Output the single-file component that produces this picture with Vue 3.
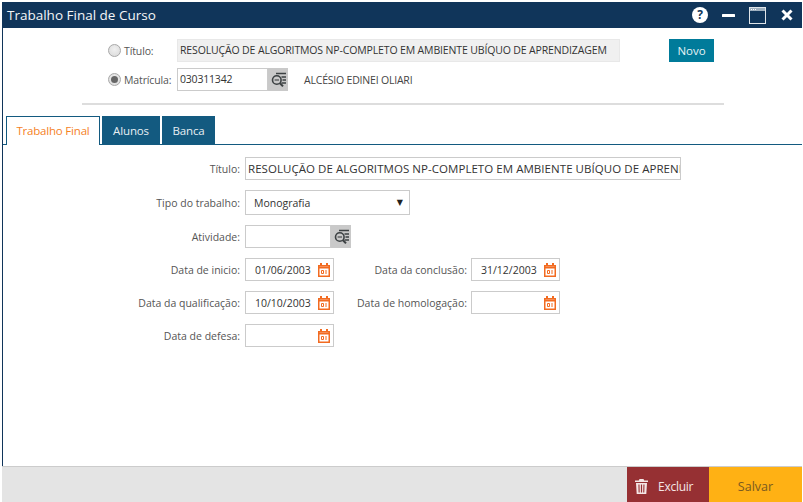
<script setup>
const leftDates = [
  { label: 'Data de inicio:', value: '01/06/2003', label2: 'Data da conclusão:', value2: '31/12/2003' },
  { label: 'Data da qualificação:', value: '10/10/2003', label2: 'Data de homologação:', value2: '' },
]
</script>

<template>
  <div class="window">
    <header class="titlebar">
      <span class="wintitle">Trabalho Final de Curso</span>
      <div class="winicons">
        <svg width="16" height="16" viewBox="0 0 16 16"><circle cx="8" cy="8" r="8" fill="#fff"/><text x="8" y="12.2" text-anchor="middle" class="q">?</text></svg>
        <svg width="13" height="3" viewBox="0 0 13 3"><rect width="13" height="3" rx="0.5" fill="#fff"/></svg>
        <svg width="17" height="17" viewBox="0 0 17 17" fill="none"><rect x="0.5" y="0.5" width="16" height="16" stroke="#dfe5ea" stroke-width="1"/><rect x="1" y="1" width="15" height="3" fill="#9fb0bf"/><path d="M2 2.5h5" stroke="#fff" stroke-dasharray="1 1"/></svg>
        <svg class="closex" width="12" height="12" viewBox="0 0 12 12"><path d="M1.5 1.5l9 9M10.5 1.5l-9 9" stroke="#fff" stroke-width="3"/></svg>
      </div>
    </header>

    <main class="content">
      <section class="search">
        <div class="searchrow">
          <span class="radio"></span>
          <span class="rlabel">Título:</span>
          <div class="readonly">RESOLUÇÃO DE ALGORITMOS NP-COMPLETO EM AMBIENTE UBÍQUO DE APRENDIZAGEM</div>
          <button class="novo">Novo</button>
        </div>
        <div class="searchrow">
          <span class="radio on"></span>
          <span class="rlabel">Matrícula:</span>
          <div class="lookup">
            <div class="field mat">030311342</div>
            <span class="lookbtn">
              <svg width="16" height="16" viewBox="0 0 16 16" fill="none" stroke="#3c4143"><path d="M5 1.5h10" stroke-width="1.5"/><path d="M10.5 5h4.5M11.5 8h3.5M10.5 11h4.5" stroke-width="1.3"/><circle cx="5.8" cy="8" r="4.3" stroke-width="1.6"/><path d="M3.6 8h4.4" stroke-width="1.1"/><path d="M9 11.2l3 3.2" stroke-width="2"/></svg>
            </span>
          </div>
          <span class="person">ALCÉSIO EDINEI OLIARI</span>
        </div>
        <div class="divider"></div>
      </section>

      <nav class="tabs">
        <span class="tab active">Trabalho Final</span>
        <span class="tab w2">Alunos</span>
        <span class="tab w3">Banca</span>
      </nav>

      <section class="form">
        <div class="row">
          <label class="flabel">Título:</label>
          <div class="field long">RESOLUÇÃO DE ALGORITMOS NP-COMPLETO EM AMBIENTE UBÍQUO DE APRENDIZAGEM</div>
        </div>
        <div class="row">
          <label class="flabel">Tipo do trabalho:</label>
          <div class="select"><span>Monografia</span><i class="caret">▼</i></div>
        </div>
        <div class="row">
          <label class="flabel">Atividade:</label>
          <div class="lookup">
            <div class="field act"></div>
            <span class="lookbtn">
              <svg width="16" height="16" viewBox="0 0 16 16" fill="none" stroke="#3c4143"><path d="M5 1.5h10" stroke-width="1.5"/><path d="M10.5 5h4.5M11.5 8h3.5M10.5 11h4.5" stroke-width="1.3"/><circle cx="5.8" cy="8" r="4.3" stroke-width="1.6"/><path d="M3.6 8h4.4" stroke-width="1.1"/><path d="M9 11.2l3 3.2" stroke-width="2"/></svg>
            </span>
          </div>
        </div>
        <div v-for="d in leftDates" :key="d.label" class="row">
          <label class="flabel">{{ d.label }}</label>
          <div class="date">
            <span>{{ d.value }}</span>
            <svg class="cal" width="12" height="14" viewBox="0 0 12 14" fill="none" stroke="#f26b21"><rect x="0.75" y="2.75" width="10.5" height="10.5" stroke-width="1.5"/><path d="M1 4.5h10" stroke-width="2"/><path d="M3 0v3M9 0v3" stroke-width="2"/><path d="M3.5 7.5h2v3h-2zM8 7v4" stroke-width="1"/></svg>
          </div>
          <label class="flabel second">{{ d.label2 }}</label>
          <div class="date">
            <span>{{ d.value2 }}</span>
            <svg class="cal" width="12" height="14" viewBox="0 0 12 14" fill="none" stroke="#f26b21"><rect x="0.75" y="2.75" width="10.5" height="10.5" stroke-width="1.5"/><path d="M1 4.5h10" stroke-width="2"/><path d="M3 0v3M9 0v3" stroke-width="2"/><path d="M3.5 7.5h2v3h-2zM8 7v4" stroke-width="1"/></svg>
          </div>
        </div>
        <div class="row">
          <label class="flabel">Data de defesa:</label>
          <div class="date">
            <span></span>
            <svg class="cal" width="12" height="14" viewBox="0 0 12 14" fill="none" stroke="#f26b21"><rect x="0.75" y="2.75" width="10.5" height="10.5" stroke-width="1.5"/><path d="M1 4.5h10" stroke-width="2"/><path d="M3 0v3M9 0v3" stroke-width="2"/><path d="M3.5 7.5h2v3h-2zM8 7v4" stroke-width="1"/></svg>
          </div>
        </div>
      </section>
    </main>

    <footer class="footer">
      <button class="excluir">
        <svg width="13" height="15" viewBox="0 0 13 15" fill="#f4e6e6"><path d="M4.5 0h4l.7 1.5H13v1.6H0V1.5h3.8z"/><path d="M1 4h11l-.7 11H1.7zM3.4 5.5l.2 8h1.1l-.2-8zM5.9 5.5v8h1.2v-8zM8.4 5.5l-.2 8h1.1l.2-8z" fill-rule="evenodd"/></svg>
        <span>Excluir</span>
      </button>
      <button class="salvar">Salvar</button>
    </footer>
  </div>
</template>

<style scoped>
.window {
  width: 803px;
  height: 502px;
  box-sizing: border-box;
  padding: 2px 1px 0 2px;
  background: #fff;
  display: flex;
  flex-direction: column;
  font-family: "Open Sans", "Noto Sans", sans-serif;
  font-size: 10.5px;
  color: #444;
  overflow: hidden;
}
.titlebar {
  height: 26px;
  flex: none;
  background: #10355a;
  color: #f4f6f8;
  display: flex;
  align-items: center;
  justify-content: space-between;
  padding: 0 9px 0 5px;
}
.wintitle { font-size: 13.5px; }
.winicons { display: flex; align-items: center; gap: 14px; }
.closex { margin-left: 1px; }
.q { font: 700 12px "Open Sans", sans-serif; fill: #10355a; }
.content {
  flex: 1;
  min-height: 0;
  border-left: 1px solid #10355a;
  display: flex;
  flex-direction: column;
}
.search { padding: 11px 0 0 105px; }
.searchrow { display: flex; align-items: center; height: 23px; margin-bottom: 6px; }
.radio {
  width: 13px;
  height: 13px;
  box-sizing: border-box;
  border-radius: 50%;
  border: 1px solid #a8a8a8;
  background: radial-gradient(circle at 50% 40%, #f0f0f0, #d8d8d8);
  flex: none;
  display: flex;
  align-items: center;
  justify-content: center;
}
.radio.on::after {
  content: "";
  width: 7px;
  height: 7px;
  border-radius: 50%;
  background: #666;
}
.rlabel { width: 56px; padding-left: 3px; box-sizing: border-box; flex: none; letter-spacing: -0.12px; color: #555; white-space: nowrap; }
.readonly {
  width: 443px;
  height: 23px;
  box-sizing: border-box;
  background: #f0f0f0;
  border: 1px solid #e8e8e8;
  padding: 0 2px;
  line-height: 21px;
  color: #333;
  letter-spacing: -0.14px;
  white-space: nowrap;
  overflow: hidden;
}
.novo {
  margin-left: 49px;
  width: 45px;
  height: 23px;
  border: 0;
  padding: 0;
  background: #007b9a;
  color: #e8f3f6;
  font: 500 11.5px "Open Sans", sans-serif;
}
.lookup { display: flex; }
.field {
  height: 23px;
  box-sizing: border-box;
  border: 1px solid #cbcbcb;
  background: #fff;
  padding: 0 2px;
  line-height: 21px;
  white-space: nowrap;
  overflow: hidden;
  color: #333;
}
.mat { width: 91px; letter-spacing: -0.2px; }
.act { width: 86px; }
.lookbtn {
  width: 20px;
  height: 23px;
  box-sizing: border-box;
  padding: 1px 0 0 2px;
  background: #c9c9c9;
  display: flex;
  align-items: center;
  justify-content: center;
  flex: none;
}
.person { margin-left: 16px; letter-spacing: -0.2px; color: #444; }
.divider { width: 642px; height: 2px; margin: 12px 0 0 -26px; background: #ddd; }
.tabs {
  margin-top: 11px;
  height: 29px;
  flex: none;
  padding-left: 3px;
  display: flex;
  gap: 2px;
  border-bottom: 1px solid #135a80;
  box-sizing: border-box;
}
.tab {
  background: #135a80;
  color: #e8eff3;
  font-size: 11.5px;
  font-weight: 500;
  letter-spacing: -0.15px;
  display: flex;
  align-items: center;
  justify-content: center;
  width: 58px;
  height: 28px;
}
.tab.w3 { width: 53px; }
.tab.active {
  width: 94px;
  height: 29px;
  box-sizing: border-box;
  background: #fff;
  color: #f5821f;
  font-weight: 400;
  border: 1px solid #135a80;
  border-bottom: 0;
  letter-spacing: -0.2px;
  padding-bottom: 1px;
}
.form {
  padding-top: 12px;
  display: flex;
  flex-direction: column;
  gap: 10px;
}
.row { display: flex; align-items: center; }
.flabel {
  width: 242px;
  padding-right: 5px;
  box-sizing: border-box;
  text-align: right;
  flex: none;
  color: #555;
  white-space: nowrap;
}
.flabel.second { width: 137px; padding-right: 4px; }
.long { width: 436px; font-size: 11.5px; letter-spacing: 0.05px; color: #333; }
.select {
  width: 165px;
  height: 25px;
  box-sizing: border-box;
  border: 1px solid #cbcbcb;
  display: flex;
  align-items: center;
  justify-content: space-between;
  padding: 0 6px 0 8px;
  color: #333;
}
.caret { font-style: normal; font-size: 8px; color: #222; font-family: "DejaVu Sans", sans-serif; }
.date {
  width: 89px;
  height: 23px;
  box-sizing: border-box;
  border: 1px solid #cbcbcb;
  display: flex;
  align-items: center;
  justify-content: space-between;
  padding: 0 3px 0 9px;
  color: #333;
}
.footer {
  height: 36px;
  flex: none;
  box-sizing: border-box;
  background: #e4e4e4;
  border-top: 1px solid #ccc;
  display: flex;
  justify-content: flex-end;
}
.excluir, .salvar { border: 0; font-family: "Open Sans", sans-serif; }
.excluir {
  width: 82px;
  padding: 3px 0 0 8px;
  background: #963033;
  color: #f4e6e6;
  font-size: 12px;
  font-weight: 500;
  letter-spacing: -0.25px;
  display: flex;
  align-items: center;
  gap: 10px;
}
.salvar {
  width: 93px;
  padding: 3px 0 0;
  background: #ffb114;
  color: #7a5a20;
  font-size: 12.5px;
}
</style>
